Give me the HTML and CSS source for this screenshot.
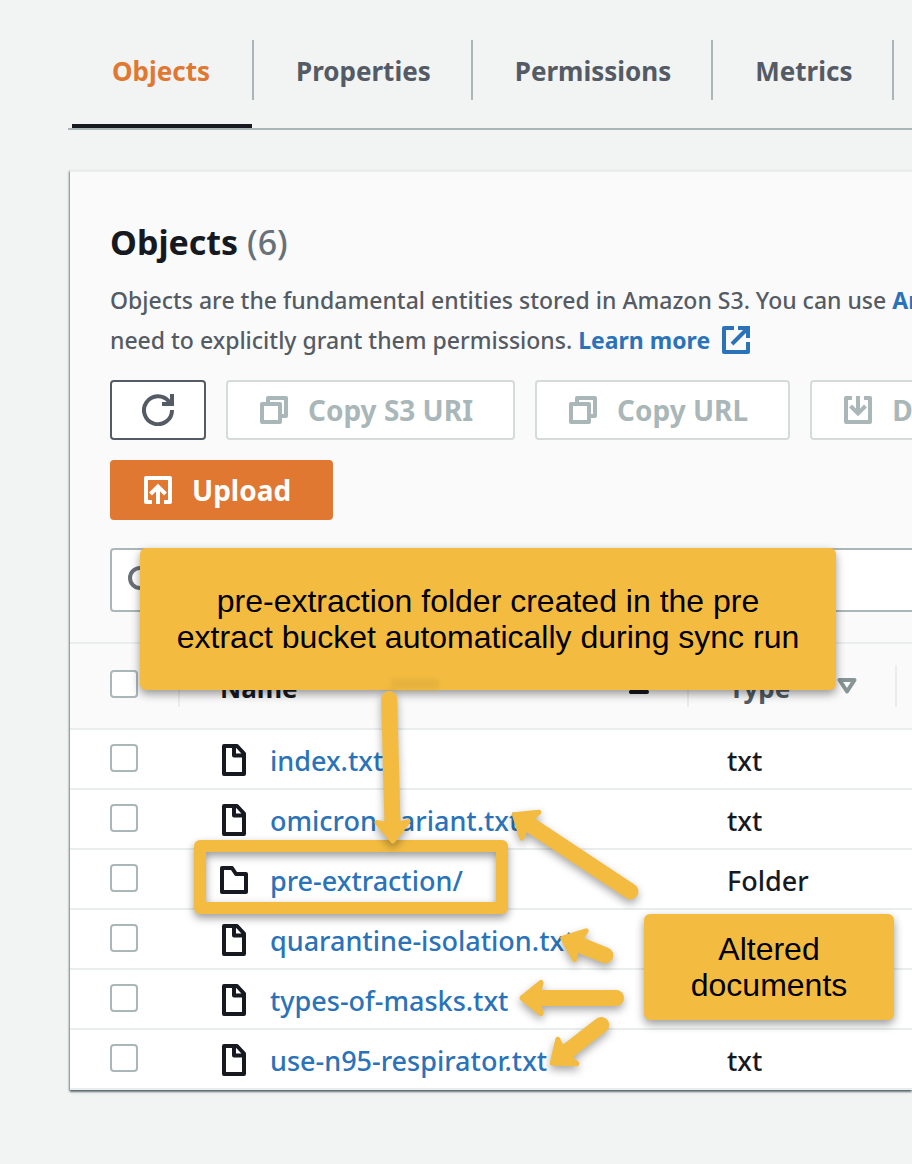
FILE: index.html
```html
<!DOCTYPE html>
<html lang="en">
<head>
<meta charset="utf-8">
<title>Objects</title>
<link rel="stylesheet" href="styles.css">
</head>
<body>
<svg class="defs" aria-hidden="true">
  <symbol id="file" viewBox="0 0 24 32"><path d="M2 2h13l7 7.500v20.500h-20z M12 2v9.500h10" fill="none" stroke="currentColor" stroke-width="4" stroke-linejoin="round"/></symbol>
  <symbol id="folder" viewBox="0 0 28 28"><path d="M2 2h10l4 6h10v18h-24z" fill="none" stroke="currentColor" stroke-width="4" stroke-linejoin="round"/></symbol>
  <symbol id="copy" viewBox="0 0 28 28"><path d="M2 8h18v18h-18z M8 8v-6h18v18h-6" fill="none" stroke="currentColor" stroke-width="4" stroke-linejoin="round"/></symbol>
</svg>
<div class="page">
  <nav class="tabs">
    <a class="tab active" href="#objects">Objects</a>
    <a class="tab" href="#properties">Properties</a>
    <a class="tab" href="#permissions">Permissions</a>
    <a class="tab" href="#metrics">Metrics</a>
  </nav>
  <main class="panel">
    <header class="intro">
      <h1>Objects <span class="count">(6)</span></h1>
      <p>Objects are the fundamental entities stored in Amazon S3. You can use <a href="#inventory">Amazon S3 inventory</a><br>need to explicitly grant them permissions. <a href="#learn">Learn more <svg class="ext" viewBox="0 0 28 28" fill="none" stroke="currentColor" stroke-width="4"><path d="M12 2H2v24h24V16" stroke-linejoin="round"/><path d="M16 2h10v10M25 3L10 18"/></svg></a></p>
      <div class="actions">
        <button class="btn refresh" aria-label="Refresh"><svg class="icon32" viewBox="0 0 32 32" fill="none" stroke="currentColor" stroke-width="4"><path d="M30 16A14 14 0 1 1 27 7.500L29 10"/><path d="M30 0v10H20"/></svg></button>
        <button class="btn" disabled><svg class="icon"><use href="#copy"/></svg>Copy S3 URI</button>
        <button class="btn" disabled><svg class="icon"><use href="#copy"/></svg>Copy URL</button>
        <button class="btn" disabled><svg class="icon" viewBox="0 0 28 28" fill="none" stroke="currentColor" stroke-width="4"><path d="M8 2H2v24h24V2H20" stroke-linejoin="round"/><path d="M14 0v17M6.500 10L14 17.500 21.500 10"/></svg>Download</button>
      </div>
      <button class="btn primary"><svg class="icon" viewBox="0 0 28 28" fill="none" stroke="currentColor" stroke-width="4"><path d="M8 26H2V2h24v24H20" stroke-linejoin="round"/><path d="M14 28V11M6.500 18L14 10.500 21.500 18"/></svg>Upload</button>
      <div class="search">
        <svg class="icon" viewBox="0 0 28 28" fill="none" stroke="currentColor" stroke-width="4"><circle cx="12" cy="12" r="10"/><path d="M19 19l8 8"/></svg>
        <input type="text" aria-label="Find objects">
      </div>
    </header>
    <table>
      <thead>
        <tr>
          <th class="pick"><input type="checkbox" aria-label="Select all"></th>
          <th class="name"><div class="th">Name<svg class="sort" viewBox="0 0 20 16"><path d="M2 14h16L10 2z" fill="currentColor" stroke="currentColor" stroke-width="4" stroke-linejoin="round"/></svg></div></th>
          <th class="type"><div class="th">Type<svg class="sort" viewBox="0 0 20 16"><path d="M2.500 2h15L10 13.500z" fill="none" stroke="currentColor" stroke-width="4" stroke-linejoin="round"/></svg></div></th>
          <th class="rest"></th>
        </tr>
      </thead>
      <tbody>
        <tr><td class="pick"><input type="checkbox" aria-label="index.txt"></td><td><div class="object"><svg class="kind"><use href="#file"/></svg><a href="#1">index.txt</a></div></td><td class="type">txt</td><td></td></tr>
        <tr><td class="pick"><input type="checkbox" aria-label="omicron-variant.txt"></td><td><div class="object"><svg class="kind"><use href="#file"/></svg><a href="#2">omicron-variant.txt</a></div></td><td class="type">txt</td><td></td></tr>
        <tr><td class="pick"><input type="checkbox" aria-label="pre-extraction/"></td><td><div class="object"><svg class="kind dir"><use href="#folder"/></svg><a href="#3">pre-extraction/</a></div></td><td class="type">Folder</td><td></td></tr>
        <tr><td class="pick"><input type="checkbox" aria-label="quarantine-isolation.txt"></td><td><div class="object"><svg class="kind"><use href="#file"/></svg><a href="#4">quarantine-isolation.txt</a></div></td><td class="type"></td><td></td></tr>
        <tr><td class="pick"><input type="checkbox" aria-label="types-of-masks.txt"></td><td><div class="object"><svg class="kind"><use href="#file"/></svg><a href="#5">types-of-masks.txt</a></div></td><td class="type"></td><td></td></tr>
        <tr><td class="pick"><input type="checkbox" aria-label="use-n95-respirator.txt"></td><td><div class="object"><svg class="kind"><use href="#file"/></svg><a href="#6">use-n95-respirator.txt</a></div></td><td class="type">txt</td><td></td></tr>
      </tbody>
    </table>
  </main>
  <div class="callout main-note">pre-extraction folder created in the pre<br>extract bucket automatically during sync run</div>
  <div class="smudge"></div>
  <div class="callout side-note">Altered<br>documents</div>
  <div class="highlight"></div>
  <svg class="arrows" viewBox="0 0 912 1164" aria-hidden="true">
    <g transform="translate(393 844) rotate(-91.500)"><path class="shaft" d="M18 0H145"/><path class="head" d="M3 0L22-15.500 20-7V7L22 15.500z"/></g>
    <g transform="translate(512 813) rotate(33.500)"><path class="shaft" d="M18 0H142"/><path class="head" d="M3 0L22-15.500 20-7V7L22 15.500z"/></g>
    <g transform="translate(560 937) rotate(22)"><path class="shaft" d="M18 0H49"/><path class="head" d="M3 0L22-15.500 20-7V7L22 15.500z"/></g>
    <g transform="translate(519 998)"><path class="shaft" d="M18 0H97"/><path class="head" d="M3 0L22-15.500 20-7V7L22 15.500z"/></g>
    <g transform="translate(550 1065) rotate(-38)"><path class="shaft" d="M18 0H65"/><path class="head" d="M3 0L22-15.500 20-7V7L22 15.500z"/></g>
  </svg>
</div>
</body>
</html>
```

FILE: styles.css
```css
* { box-sizing: border-box; }
body {
  margin: 0;
  background: #f2f3f3;
  color: #16191f;
  font: 500 27px/40px "Noto Sans", sans-serif;
}
a { color: #2a73b8; text-decoration: none; }
button, input { font: inherit; }
.defs { position: absolute; width: 0; height: 0; }
.page {
  position: relative;
  overflow: hidden;
  min-height: 100vh;
  padding: 40px 0 72px 68px;
}
.tabs {
  display: flex;
  border-bottom: 2px solid #aab7b8;
  padding-left: 4px;
}
.tab {
  position: relative;
  flex: none;
  height: 88px;
  padding: 11px 42px 0;
  color: #545b64;
  font-weight: 700;
  font-size: 26px;
}
.tab::after {
  content: "";
  position: absolute;
  top: 0;
  right: 0;
  width: 2px;
  height: 60px;
  background: #aab7b8;
}
.tab.active {
  padding: 11px 44px 0 40px;
  color: #e07832;
}
.tab.active::before {
  content: "";
  position: absolute;
  left: 0;
  right: 2px;
  bottom: 0;
  height: 4px;
  background: #16191f;
}
.panel {
  margin: 40px 0 0 2px;
  border-top: 2px solid #eaeded;
  background: #fff;
  box-shadow: 0 2px 2px rgba(0, 28, 36, .5), -1px 1px 2px rgba(0, 7, 22, .35);
}
.intro {
  padding: 48px 0 30px 40px;
  background: #fafafa;
  border-bottom: 2px solid #eaeded;
}
h1 {
  margin: 0;
  font-size: 34px;
  line-height: 44px;
}
.count { color: #687078; font-weight: 500; }
.intro p {
  margin: 16px 0 20px;
  color: #545b64;
  font-size: 23px;
  white-space: nowrap;
}
.intro p a { font-weight: 700; }
.ext { width: 28px; height: 28px; margin-left: 6px; vertical-align: -5px; }
.actions { display: flex; gap: 20px; margin-bottom: 20px; }
.btn {
  display: flex;
  flex: none;
  align-items: center;
  gap: 20px;
  height: 60px;
  padding: 0 40px 0 32px;
  border: 2px solid #545b64;
  border-radius: 4px;
  background: #fff;
  color: #545b64;
  font-weight: 700;
  font-size: 28px;
  white-space: nowrap;
}
.btn:disabled { border-color: #d5dbdb; color: #aab7b8; }
.btn.refresh { padding: 0 30px; }
.btn.primary { border-color: #e07832; background: #e07832; color: #fff; }
.icon { width: 28px; height: 28px; flex: none; }
.icon32 { width: 32px; height: 32px; }
.search {
  display: flex;
  align-items: center;
  height: 64px;
  margin-top: 28px;
  margin-right: -40px;
  padding-left: 16px;
  border: 2px solid #aab7b8;
  border-radius: 4px;
  background: #fff;
  color: #687078;
}
.search input { flex: 1; border: 0; outline: 0; background: none; }
table { width: 100%; border-collapse: separate; border-spacing: 0; table-layout: fixed; }
th, td { padding: 0; text-align: left; border-bottom: 2px solid #eaeded; }
th { height: 86px; background: #fafafa; font-size: 26px; }
td { height: 60px; }
.pick { width: 110px; padding-left: 40px; }
.name { width: 509px; }
th.type { width: 208px; color: #545b64; }
td.type { padding: 4px 0 0 38px; }
.th {
  display: flex;
  align-items: center;
  justify-content: space-between;
  height: 42px;
  padding: 4px 38px 0 40px;
  border-right: 2px solid #eaeded;
}
th.pick {
  background: linear-gradient(#eaeded, #eaeded) right center / 2px 42px no-repeat #fafafa;
}
.sort { width: 20px; height: 16px; margin-bottom: 4px; flex: none; color: #16191f; }
.type .sort { color: #879596; }
input[type="checkbox"] {
  display: block;
  appearance: none;
  width: 28px;
  height: 28px;
  margin: 0 0 2px;
  border: 2px solid #aab7b8;
  border-radius: 4px;
  background: #fff;
}
th input[type="checkbox"] { margin-bottom: 4px; }
.object {
  display: flex;
  align-items: center;
  padding: 4px 0 0 42px;
}
.kind { width: 24px; height: 32px; margin: 0 24px 2px 0; color: #16191f; }
.kind.dir { width: 28px; height: 28px; margin: 0 22px 2px -2px; }
.callout {
  position: absolute;
  display: flex;
  align-items: center;
  justify-content: center;
  border-radius: 6px;
  background: #f3bc41;
  color: #000;
  font: 32px/36px "Liberation Sans", sans-serif;
  text-align: center;
  white-space: nowrap;
  box-shadow: 0 4px 10px rgba(0, 0, 0, .4);
}
.main-note { left: 140px; top: 548px; width: 696px; height: 142px; }
.side-note { left: 644px; top: 914px; width: 250px; height: 106px; }
.smudge {
  position: absolute;
  left: 391px;
  top: 679px;
  width: 48px;
  height: 10px;
  background: #e6b23e;
  filter: blur(2px);
}
.highlight {
  position: absolute;
  left: 194px;
  top: 840px;
  width: 314px;
  height: 74px;
  border: 12px solid #f3bc41;
  border-radius: 6px;
  filter: drop-shadow(0 4px 4px rgba(0, 0, 0, .4));
}
.arrows {
  position: absolute;
  left: 0;
  top: 0;
  width: 912px;
  height: 1164px;
  pointer-events: none;
  filter: drop-shadow(0 4px 4px rgba(0, 0, 0, .35));
}
.shaft { stroke: #f3bc41; stroke-width: 16; stroke-linecap: round; }
.head { fill: #f3bc41; stroke: #f3bc41; stroke-width: 5; stroke-linejoin: round; }
```
